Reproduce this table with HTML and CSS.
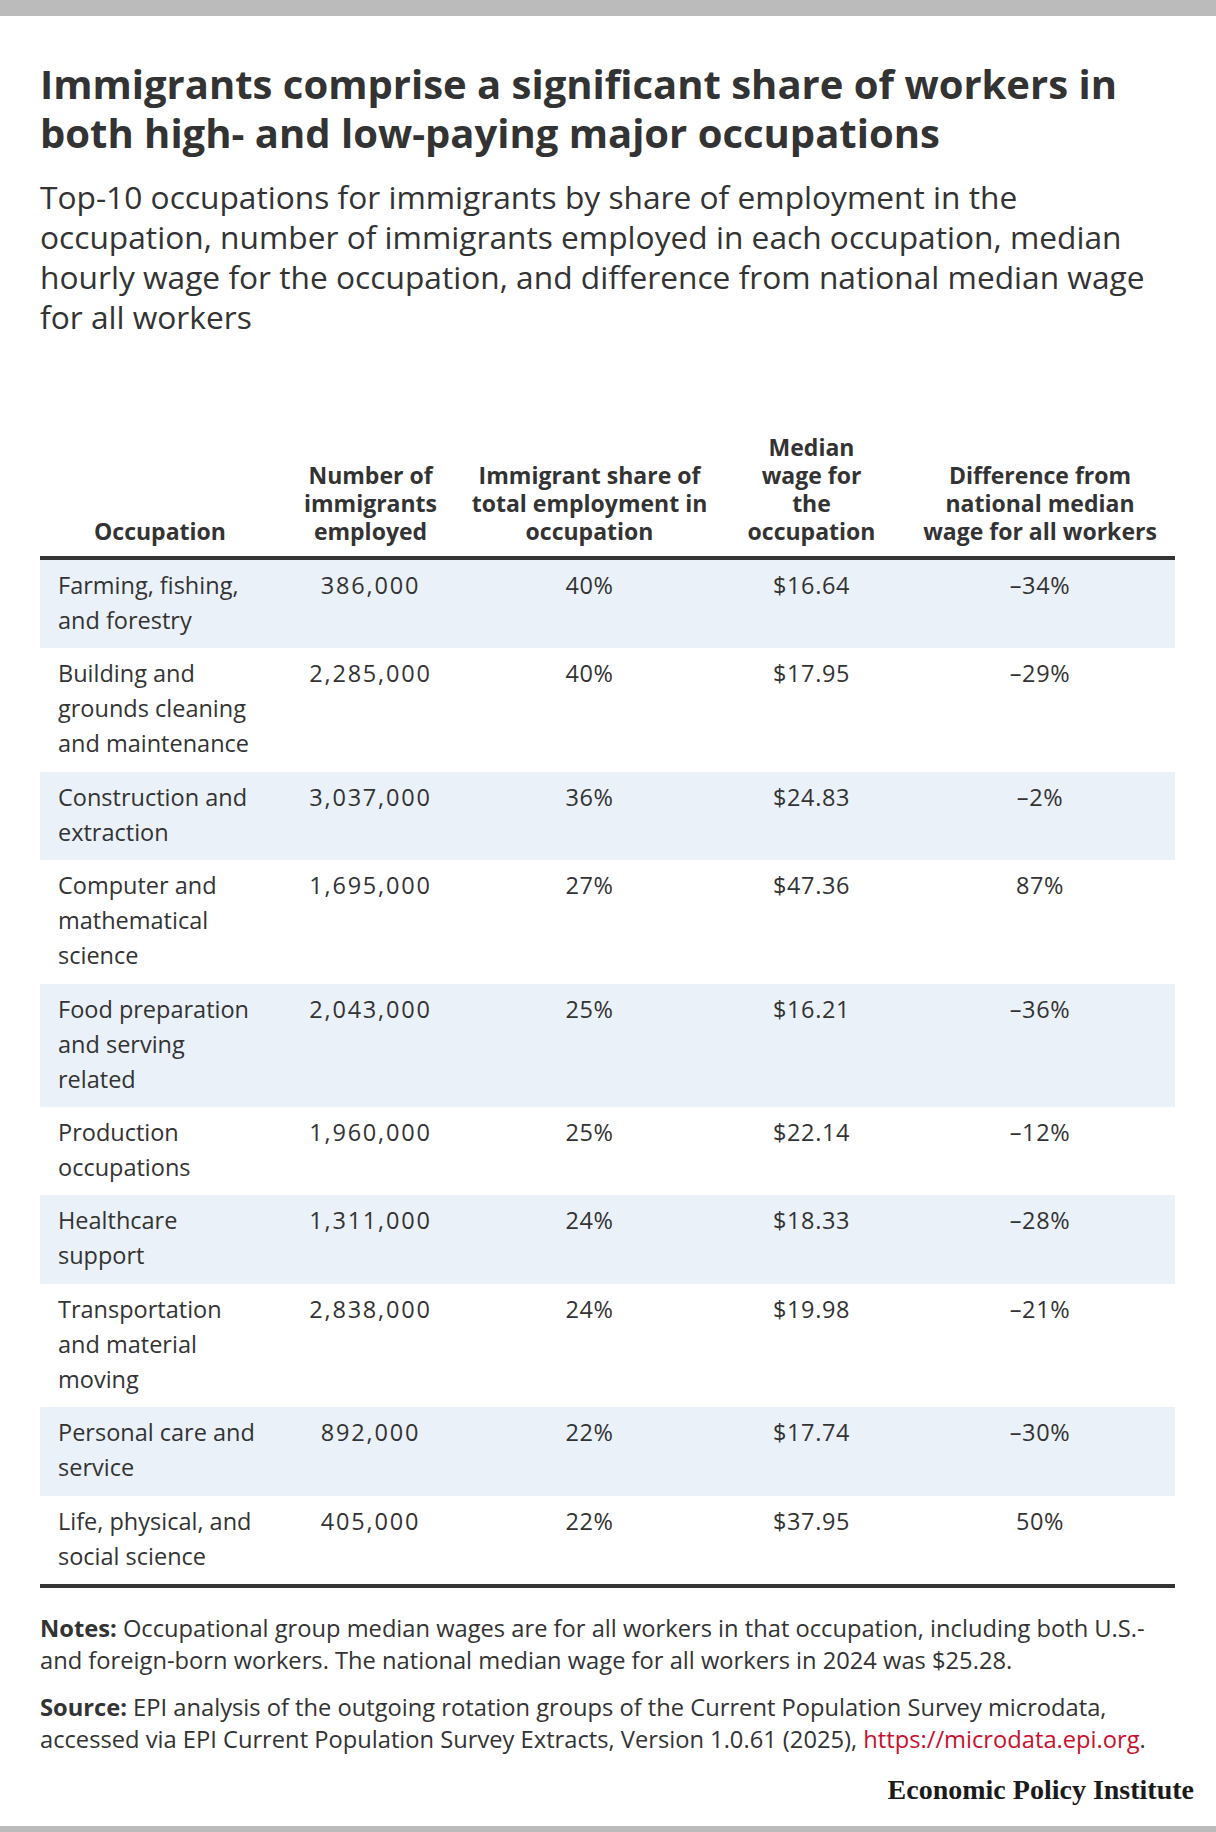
FILE: index.html
```html
<!DOCTYPE html>
<html lang="en">
<head>
<meta charset="utf-8">
<title>Immigrants comprise a significant share of workers</title>
<link rel="stylesheet" href="styles.css">
</head>
<body>
<div class="topbar"></div>
<main class="content">
  <h1 class="title">Immigrants comprise a significant share of workers in<br>both high- and low-paying major occupations</h1>
  <p class="subtitle">Top-10 occupations for immigrants by share of employment in the<br>occupation, number of immigrants employed in each occupation, median<br>hourly wage for the occupation, and difference from national median wage<br>for all workers</p>

  <table class="data">
    <colgroup>
      <col class="c1"><col class="c2"><col class="c3"><col class="c4"><col class="c5">
    </colgroup>
    <thead>
      <tr>
        <th>Occupation</th>
        <th>Number of<br>immigrants<br>employed</th>
        <th>Immigrant share of<br>total employment in<br>occupation</th>
        <th>Median<br>wage for<br>the<br>occupation</th>
        <th>Difference from<br>national median<br>wage for all workers</th>
      </tr>
    </thead>
    <tbody>
      <tr class="shade"><td class="occ">Farming, fishing,<br>and forestry</td><td class="count">386,000</td><td>40%</td><td>$16.64</td><td>&ndash;34%</td></tr>
      <tr><td class="occ">Building and<br>grounds cleaning<br>and maintenance</td><td class="count">2,285,000</td><td>40%</td><td>$17.95</td><td>&ndash;29%</td></tr>
      <tr class="shade"><td class="occ">Construction and<br>extraction</td><td class="count">3,037,000</td><td>36%</td><td>$24.83</td><td>&ndash;2%</td></tr>
      <tr><td class="occ">Computer and<br>mathematical<br>science</td><td class="count">1,695,000</td><td>27%</td><td>$47.36</td><td>87%</td></tr>
      <tr class="shade"><td class="occ">Food preparation<br>and serving<br>related</td><td class="count">2,043,000</td><td>25%</td><td>$16.21</td><td>&ndash;36%</td></tr>
      <tr><td class="occ">Production<br>occupations</td><td class="count">1,960,000</td><td>25%</td><td>$22.14</td><td>&ndash;12%</td></tr>
      <tr class="shade"><td class="occ">Healthcare<br>support</td><td class="count">1,311,000</td><td>24%</td><td>$18.33</td><td>&ndash;28%</td></tr>
      <tr><td class="occ">Transportation<br>and material<br>moving</td><td class="count">2,838,000</td><td>24%</td><td>$19.98</td><td>&ndash;21%</td></tr>
      <tr class="shade"><td class="occ">Personal care and<br>service</td><td class="count">892,000</td><td>22%</td><td>$17.74</td><td>&ndash;30%</td></tr>
      <tr><td class="occ">Life, physical, and<br>social science</td><td class="count">405,000</td><td>22%</td><td>$37.95</td><td>50%</td></tr>
    </tbody>
  </table>

  <div class="notes">
    <p><strong>Notes:</strong> Occupational group median wages are for all workers in that occupation, including both U.S.-<br>and foreign-born workers. The national median wage for all workers in 2024 was $25.28.</p>
    <p><strong>Source:</strong> EPI analysis of the outgoing rotation groups of the Current Population Survey microdata,<br>accessed via EPI Current Population Survey Extracts, Version 1.0.61 (2025), <a href="#">https://microdata.epi.org</a>.</p>
  </div>

  <div class="brand">Economic Policy Institute</div>
</main>
<div class="bottombar"></div>
</body>
</html>
```

FILE: styles.css
```css
html, body {
  margin: 0;
  padding: 0;
  background: #ffffff;
}

body {
  font-family: "Open Sans", "Lato", sans-serif;
  color: #333333;
  width: 1216px;
}

.topbar {
  height: 16px;
  background: #bbbbbb;
}

.bottombar {
  height: 6px;
  background: #bbbbbb;
}

.content {
  padding: 0 41px 0 40px;
  display: flex;
  flex-direction: column;
}

.title {
  margin: 43px 0 0 0;
  font-size: 40px;
  line-height: 49px;
  font-weight: 700;
  color: #333333;
  white-space: nowrap;
}

.subtitle {
  margin: 20px 0 0 0;
  font-size: 31.7px;
  line-height: 40px;
  font-weight: 400;
  color: #333333;
  white-space: nowrap;
}

.data {
  margin-top: 96px;
  width: 1135px;
  border-collapse: collapse;
  table-layout: fixed;
}

.c1 { width: 240px; }
.c2 { width: 181px; }
.c3 { width: 257px; }
.c4 { width: 187px; }
.c5 { width: 270px; }

.data th {
  font-size: 23px;
  line-height: 28px;
  font-weight: 700;
  text-align: center;
  vertical-align: bottom;
  padding: 0 4px 11px;
  color: #333333;
  white-space: nowrap;
  border-bottom: 4px solid #333333;
}

.data td {
  font-size: 23.5px;
  line-height: 35px;
  text-align: center;
  vertical-align: top;
  padding: 8px 4px 10.4px;
  color: #333333;
  white-space: nowrap;
  letter-spacing: 0.6px;
}

.data td.occ {
  text-align: left;
  padding-left: 18px;
  letter-spacing: 0;
}

.data td.count {
  letter-spacing: 1.8px;
}

.data tr.shade td {
  background: #eaf1f9;
}

.data tbody tr:last-child td {
  border-bottom: 4px solid #333333;
}

.notes {
  margin-top: 24px;
  display: flex;
  flex-direction: column;
  gap: 15px;
  font-size: 23.7px;
  line-height: 32px;
  color: #333333;
}

.notes p {
  margin: 0;
  white-space: nowrap;
}

.notes strong {
  font-weight: 700;
}

.notes a {
  color: #c8102e;
  text-decoration: none;
}

.brand {
  align-self: flex-end;
  margin: 20px -19px 21px 0;
  font-family: "Liberation Serif", "DejaVu Serif", serif;
  font-weight: 700;
  font-size: 28px;
  line-height: 30px;
  color: #1a1a1a;
}
```
